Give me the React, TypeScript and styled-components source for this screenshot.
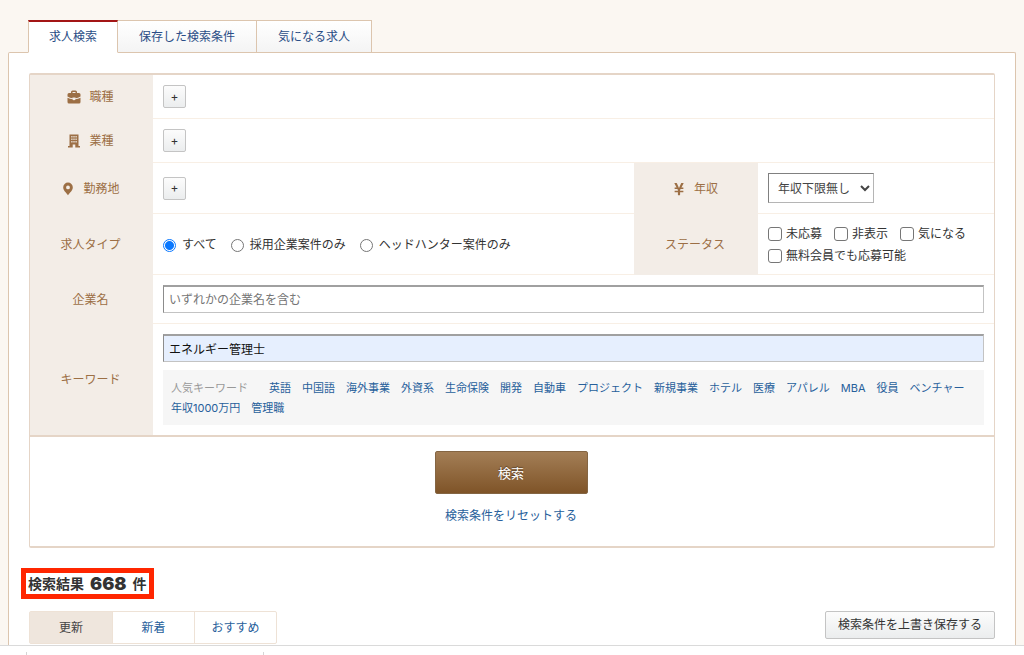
import React from "react";
import styled, { createGlobalStyle, css } from "styled-components";
import { FaYenSign } from "react-icons/fa";

const GlobalStyle = createGlobalStyle`
  *, *::before, *::after { box-sizing: border-box; }
  body {
    margin: 0;
    background: #fbf7f2;
    color: #333;
    font-family: Inter, "Noto Sans CJK JP", sans-serif;
    font-size: 12px;
    line-height: 20px;
  }
  button, input, select { font: inherit; color: inherit; }
  a { color: #27609b; text-decoration: none; }
`;

const Page = styled.div`
  display: flex;
  flex-direction: column;
  min-height: 100vh;
`;

const Main = styled.main`
  flex: 1;
  display: flex;
  flex-direction: column;
  padding: 20px 8px 0;
`;

const Tabs = styled.nav`
  display: flex;
  margin: 0 20px -1px;
  z-index: 1;
`;

const Tab = styled.a<{ $active?: boolean }>`
  height: 33px;
  padding: 6px 21px 0;
  color: #2a4d86;
  border: 1px solid #dcc5ae;
  border-left-width: 0;
  background: linear-gradient(#ffffff, #f4f4f4);
  ${(p) =>
    p.$active &&
    css`
      padding: 5px 20px 0;
      border-left-width: 1px;
      border-top: 2px solid #a31515;
      border-bottom-color: #fff;
      background: #fff;
    `}
`;

const Panel = styled.section`
  flex: 1;
  padding: 20px 20px 0;
  background: #fff;
  border: 1px solid #dcc5ae;
  border-bottom: 0;
  border-radius: 2px 2px 0 0;
`;

const SearchForm = styled.form`
  border: 2px solid #e5d5c7;
  border-left-width: 1px;
  border-right-width: 1px;
  border-radius: 2px;
`;

const Conditions = styled.div`
  display: grid;
  grid-template-columns: 123px minmax(0, 1fr) 124px 236px;
  grid-template-rows: 44px 44px 51px 61px 49px auto;
  border-bottom: 2px solid #e5d5c7;
`;

const Heading = styled.div`
  display: flex;
  align-items: center;
  justify-content: center;
  gap: 8px;
  padding-right: 2px;
  background: #f3ede7;
  color: #9c6f45;
`;

const Cell = styled.div<{ $wide?: boolean; $last?: boolean }>`
  display: flex;
  flex-wrap: wrap;
  align-items: center;
  align-content: center;
  column-gap: 12px;
  padding: 0 10px;
  grid-column: ${(p) => (p.$wide ? "2 / -1" : "auto")};
  border-bottom: ${(p) => (p.$last ? "0" : "1px solid #f8efe5")};
`;

const ChoiceCell = styled(Cell)<{ $gap: number }>`
  column-gap: ${(p) => p.$gap}px;
  padding-top: 2px;
`;

const KeywordCell = styled(Cell)`
  padding: 10px;
  row-gap: 8px;
`;

const IconSvg = styled.svg`
  width: 14px;
  height: 14px;
  fill: currentColor;
`;

const AddButton = styled.button`
  width: 23px;
  height: 23px;
  padding: 0;
  border: 1px solid #c4c4c4;
  border-radius: 2px;
  background: linear-gradient(#fcfcfc, #ebedee);
  line-height: 20px;
`;

const Choice = styled.label<{ $radio?: boolean }>`
  display: flex;
  align-items: center;
  gap: ${(p) => (p.$radio ? "6px" : "4px")};
  line-height: 22px;
`;

const Radio = styled.input`
  appearance: none;
  width: 13px;
  height: 13px;
  margin: 0;
  border: 1px solid #767676;
  border-radius: 50%;
  background: #fff;
  &:checked {
    border-color: #0a78ff;
    background: radial-gradient(circle, #0a78ff 4px, #fff 5px);
  }
`;

const Check = styled.input`
  appearance: none;
  width: 14px;
  height: 14px;
  margin: 0;
  border: 1px solid #767676;
  border-radius: 3px;
  background: #fff;
  &:checked {
    border-color: #0a78ff;
    background: #0a78ff;
  }
`;

const SalarySelect = styled.select`
  width: 106px;
  height: 30px;
  padding: 0 0 0 5px;
  border: 1px solid #b5b5b5;
  border-top-color: #808080;
  border-left-color: #808080;
  border-radius: 0;
  background-color: #fff;
  color: #444;
`;

const TextField = styled.input<{ $filled?: boolean }>`
  width: 100%;
  height: 28px;
  padding: 0 5px;
  border: 1px solid #c3c3c3;
  border-top: 2px solid #a0a0a0;
  border-left-color: #8c8c8c;
  background: ${(p) => (p.$filled ? "#e6effe" : "#fff")};
  color: #111;
  &::placeholder { color: #757575; opacity: 1; }
`;

const Popular = styled.div`
  display: flex;
  flex-wrap: wrap;
  column-gap: 11px;
  width: 100%;
  padding: 8px 8px 7px;
  background: #f6f6f6;
  font-size: 11px;
`;

const PopularTitle = styled.span`
  margin-right: 10px;
  color: #999;
`;

const Actions = styled.div`
  display: flex;
  flex-direction: column;
  align-items: center;
  gap: 12px;
  padding: 14px 2px 20px 0;
`;

const SearchButton = styled.button`
  width: 153px;
  height: 43px;
  border: 1px solid #846543;
  border-radius: 2px;
  background: linear-gradient(#a37e56, #7f5428);
  color: #fff;
  font-size: 13px;
  text-shadow: 0 -1px 1px rgba(0, 0, 0, 0.4);
`;

const Results = styled.h2`
  display: flex;
  align-items: center;
  gap: 6px;
  width: max-content;
  height: 31px;
  margin: 20px 0 12px -8px;
  padding: 0 2px;
  border: 5px solid #ff2600;
  font-size: 14px;
  font-weight: 700;
`;

const Count = styled.strong`
  font-size: 18px;
`;

const ResultBar = styled.div`
  display: flex;
  align-items: flex-start;
  justify-content: space-between;
`;

const SortTabs = styled.nav`
  display: flex;
  border: 1px solid #eee2d6;
  border-radius: 2px;
`;

const SortTab = styled.a<{ $active?: boolean }>`
  width: 82px;
  height: 31px;
  line-height: 32px;
  text-align: center;
  & + & { border-left: 1px solid #eee2d6; }
  ${(p) =>
    p.$active &&
    css`
      background: #efe6dd;
      color: #444;
    `}
`;

const SaveButton = styled.button`
  height: 28px;
  padding: 0 12px;
  border: 1px solid #c4c4c4;
  border-radius: 2px;
  background: linear-gradient(#fcfcfc, #ebedee);
`;

const BottomBar = styled.footer`
  display: flex;
  align-items: flex-end;
  height: 10px;
  padding-left: 26px;
  background: #fff;
  border-top: 1px solid #dadada;
`;

const BarSlot = styled.div`
  width: 238px;
  height: 3px;
  border: 1px solid #d5d5d5;
  border-width: 0 1px;
`;

const BriefcaseIcon = () => (
  <IconSvg viewBox="0 0 14 14" aria-hidden="true">
    <path
      fillRule="evenodd"
      d="M4 3V2Q4 .5 5.5.5h3Q10 .5 10 2v1h2q1.500 0 1.500 1.500v2Q11 8 8.500 8.200V7.500h-3v.7Q3 8 .5 6.500v-2Q.5 3 2 3ZM5.500 3h3V2h-3Z"
    />
    <path d="M.5 7.700Q3 9 5.500 9.200q.2 1 1.500 1t1.500-1Q11 9 13.500 7.700V12q0 1.500-1.500 1.500H2Q.5 13.500.5 12Z" />
  </IconSvg>
);

const BuildingIcon = () => (
  <IconSvg viewBox="0 0 14 14" aria-hidden="true">
    <path
      fillRule="evenodd"
      d="M2.500.5h9V12H13v1.500H8.300V10.500H5.700v3H1V12h1.500ZM4.300 2v1.500h1.200V2ZM6.400 2v1.500h1.200V2ZM8.500 2v1.500h1.200V2ZM4.300 4.500V6h1.200V4.500ZM6.400 4.500V6h1.200V4.500ZM8.500 4.500V6h1.200V4.500ZM4.300 7v1.500h1.200V7ZM6.400 7v1.500h1.200V7ZM8.500 7v1.500h1.200V7Z"
    />
  </IconSvg>
);

const PinIcon = () => (
  <IconSvg viewBox="0 0 14 14" aria-hidden="true">
    <path
      fillRule="evenodd"
      d="M7 .5a4.800 4.800 0 0 1 4.800 4.800C11.800 8.500 9 10.500 7 13.300 5 10.500 2.200 8.500 2.200 5.300A4.800 4.800 0 0 1 7 .5ZM7 3.500a1.900 1.900 0 1 0 0 3.800 1.900 1.900 0 0 0 0-3.800Z"
    />
  </IconSvg>
);

const KEYWORDS = [
  "英語", "中国語", "海外事業", "外資系", "生命保険", "開発", "自動車", "プロジェクト", "新規事業",
  "ホテル", "医療", "アパレル", "MBA", "役員", "ベンチャー", "年収1000万円", "管理職",
];
const JOB_TYPES = ["すべて", "採用企業案件のみ", "ヘッドハンター案件のみ"];
const STATUSES = ["未応募", "非表示", "気になる", "無料会員でも応募可能"];

export default function App() {
  return (
    <Page>
      <GlobalStyle />
      <Main>
        <Tabs>
          <Tab href="#search" $active>求人検索</Tab>
          <Tab href="#saved">保存した検索条件</Tab>
          <Tab href="#favorites">気になる求人</Tab>
        </Tabs>
        <Panel>
          <SearchForm onSubmit={(e) => e.preventDefault()}>
            <Conditions>
              <Heading><BriefcaseIcon />職種</Heading>
              <Cell $wide><AddButton type="button" aria-label="職種を追加">+</AddButton></Cell>

              <Heading><BuildingIcon />業種</Heading>
              <Cell $wide><AddButton type="button" aria-label="業種を追加">+</AddButton></Cell>

              <Heading><PinIcon />勤務地</Heading>
              <Cell><AddButton type="button" aria-label="勤務地を追加">+</AddButton></Cell>
              <Heading as="label" htmlFor="salary"><FaYenSign size={14} aria-hidden="true" />年収</Heading>
              <Cell>
                <SalarySelect id="salary"><option>年収下限無し</option></SalarySelect>
              </Cell>

              <Heading>求人タイプ</Heading>
              <ChoiceCell $gap={14} role="radiogroup" aria-label="求人タイプ">
                {JOB_TYPES.map((name, i) => (
                  <Choice key={name} $radio>
                    <Radio type="radio" name="jobType" defaultChecked={i === 0} />
                    {name}
                  </Choice>
                ))}
              </ChoiceCell>
              <Heading>ステータス</Heading>
              <ChoiceCell $gap={12} role="group" aria-label="ステータス">
                {STATUSES.map((name) => (
                  <Choice key={name}>
                    <Check type="checkbox" />
                    {name}
                  </Choice>
                ))}
              </ChoiceCell>

              <Heading as="label" htmlFor="company">企業名</Heading>
              <Cell $wide>
                <TextField id="company" type="text" placeholder="いずれかの企業名を含む" />
              </Cell>

              <Heading as="label" htmlFor="keyword">キーワード</Heading>
              <KeywordCell $wide $last>
                <TextField id="keyword" type="text" defaultValue="エネルギー管理士" $filled />
                <Popular>
                  <PopularTitle>人気キーワード</PopularTitle>
                  {KEYWORDS.map((word) => (
                    <a key={word} href="#keyword">{word}</a>
                  ))}
                </Popular>
              </KeywordCell>
            </Conditions>
            <Actions>
              <SearchButton type="submit">検索</SearchButton>
              <a href="#reset">検索条件をリセットする</a>
            </Actions>
          </SearchForm>

          <Results>検索結果<Count>668</Count>件</Results>
          <ResultBar>
            <SortTabs>
              <SortTab href="#updated" $active>更新</SortTab>
              <SortTab href="#new">新着</SortTab>
              <SortTab href="#recommended">おすすめ</SortTab>
            </SortTabs>
            <SaveButton type="button">検索条件を上書き保存する</SaveButton>
          </ResultBar>
        </Panel>
      </Main>
      <BottomBar><BarSlot /></BottomBar>
    </Page>
  );
}
